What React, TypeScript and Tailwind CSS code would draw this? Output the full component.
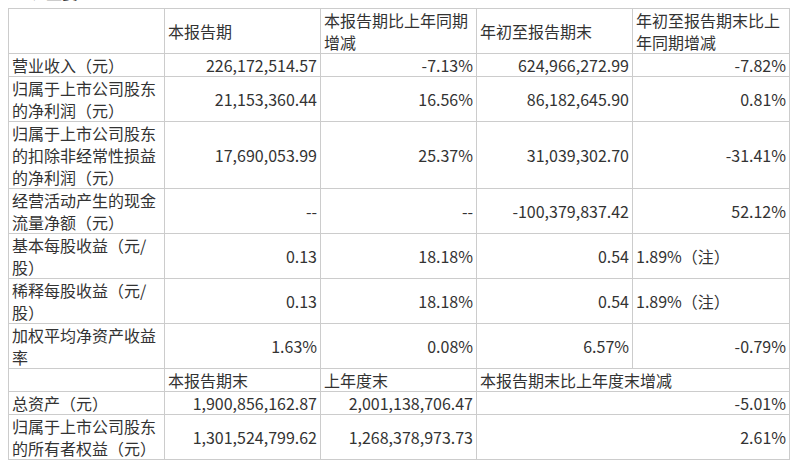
import React from "react";

type Row = {
    label: React.ReactNode;
    cells: string[];
    note?: boolean;
};

const rows: Row[] = [
    { label: "营业收入（元）", cells: ["226,172,514.57", "-7.13%", "624,966,272.99", "-7.82%"] },
    { label: <>归属于上市公司股东<br />的净利润（元）</>, cells: ["21,153,360.44", "16.56%", "86,182,645.90", "0.81%"] },
    { label: <>归属于上市公司股东<br />的扣除非经常性损益<br />的净利润（元）</>, cells: ["17,690,053.99", "25.37%", "31,039,302.70", "-31.41%"] },
    { label: <>经营活动产生的现金<br />流量净额（元）</>, cells: ["--", "--", "-100,379,837.42", "52.12%"] },
    { label: <>基本每股收益（元/<br />股）</>, cells: ["0.13", "18.18%", "0.54", "1.89%（注）"], note: true },
    { label: <>稀释每股收益（元/<br />股）</>, cells: ["0.13", "18.18%", "0.54", "1.89%（注）"], note: true },
    { label: <>加权平均净资产收益<br />率</>, cells: ["1.63%", "0.08%", "6.57%", "-0.79%"] },
];

const cell = "border border-[#cccccc] px-[3px] py-0 align-middle";

export default function App() {
    return (
        <div
            className="w-[796px] h-[469px] bg-white text-[#333333] text-[16px] leading-[22px] overflow-hidden"
            style={{ fontFamily: '"Noto Sans CJK SC", "Noto Sans", sans-serif' }}
        >
            <div className="h-[8px] overflow-hidden pl-[14px]">
                <div className="-mt-[19px]">一、主要</div>
            </div>
            <table className="ml-[8px] w-[781px] table-fixed border-collapse">
                <colgroup>
                    <col className="w-[156px]" />
                    <col className="w-[156px]" />
                    <col className="w-[156px]" />
                    <col className="w-[156px]" />
                    <col className="w-[157px]" />
                </colgroup>
                <tbody>
                    <tr className="h-[45px]">
                        <td className={cell}></td>
                        <td className={cell}>本报告期</td>
                        <td className={cell}>本报告期比上年同期<br />增减</td>
                        <td className={cell}>年初至报告期末</td>
                        <td className={cell}>年初至报告期末比上<br />年同期增减</td>
                    </tr>
                    {rows.map((r, i) => (
                        <tr key={i}>
                            <td className={cell}>{r.label}</td>
                            {r.cells.map((c, j) => (
                                <td
                                    key={j}
                                    className={`${cell} ${r.note && j === 3 ? "text-left" : "text-right"} whitespace-nowrap`}
                                >
                                    {c}
                                </td>
                            ))}
                        </tr>
                    ))}
                    <tr>
                        <td className={cell}></td>
                        <td className={cell}>本报告期末</td>
                        <td className={cell}>上年度末</td>
                        <td className={cell} colSpan={2}>本报告期末比上年度末增减</td>
                    </tr>
                    <tr>
                        <td className={cell}>总资产（元）</td>
                        <td className={`${cell} text-right`}>1,900,856,162.87</td>
                        <td className={`${cell} text-right`}>2,001,138,706.47</td>
                        <td className={`${cell} text-right`} colSpan={2}>-5.01%</td>
                    </tr>
                    <tr>
                        <td className={cell}>归属于上市公司股东<br />的所有者权益（元）</td>
                        <td className={`${cell} text-right`}>1,301,524,799.62</td>
                        <td className={`${cell} text-right`}>1,268,378,973.73</td>
                        <td className={`${cell} text-right`} colSpan={2}>2.61%</td>
                    </tr>
                </tbody>
            </table>
        </div>
    );
}
